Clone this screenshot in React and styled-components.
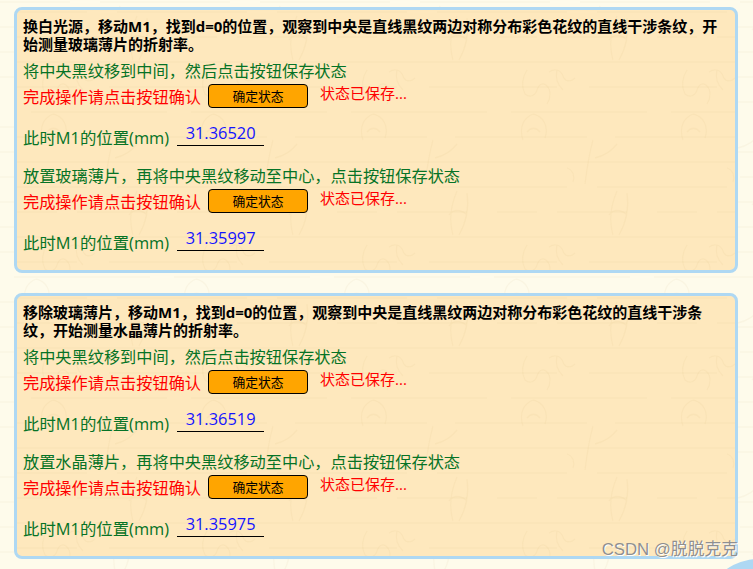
import React from "react";
import styled, { createGlobalStyle } from "styled-components";

// faint wallpaper: ruled lines every 25px with a flourish, repeats every 160x175
const flourish = encodeURIComponent(
    `<svg xmlns="http://www.w3.org/2000/svg" width="160" height="175" fill="none" stroke="#b08a40" stroke-opacity="0.05" stroke-width="1.3">
        <path d="M0 2H70M100 2H160M0 27H40M60 27H130M0 52H160M0 77H60M92 77H160M14 102H150M0 127H90M118 127H160M0 152H160"/>
        <path d="M30 60c-5 8-6 16-2 24 5 4 10 2 12-4s6-8 10-4 4 12 0 18M52 62c6-4 12-2 14 4s8 6 12 2M60 60c-2 8 0 14 6 20"/>
        <path d="M120 6c-6 14-8 30-4 44M130 8c2 14 0 28-8 42M112 30c4-6 12-6 18 0"/>
        <path d="M36 104c-10 4-14 14-10 26M36 104c10 2 16 12 12 24M30 122c4-5 9-5 13 0"/>
        <path d="M96 130c-4 14-6 28-8 44M120 134c-6 8-14 12-22 14M70 158c6 2 8 8 6 14"/>
    </svg>`
);

const GlobalStyle = createGlobalStyle`
    html, body {
        margin: 0;
        padding: 0;
    }
    body {
        width: 753px;
        height: 569px;
        overflow: hidden;
        font-family: "Open Sans", "Noto Sans CJK SC", sans-serif;
    }
`;

const Page = styled.div`
    position: relative;
    width: 753px;
    height: 569px;
    overflow: hidden;
    box-sizing: border-box;
    padding: 7px 15px 0 14px;
    display: flex;
    flex-direction: column;
    gap: 20px;
    background-color: #fefbeb;
    background-image: url("data:image/svg+xml,${flourish}");
`;

const Panel = styled.section`
    box-sizing: border-box;
    height: 266px;
    padding: 7px 6px 0;
    border: 3px solid #aed8f3;
    border-radius: 8px;
    background-color: #fee8bd;
    background-image: url("data:image/svg+xml,${flourish}");
`;

const Title = styled.p`
    margin: 0 0 7px;
    font-size: 15px;
    line-height: 18px;
    font-weight: 700;
    color: #000;
`;

const Step = styled.div`
    margin-bottom: ${props => props.$last ? 0 : 19}px;
`;

const Hint = styled.p`
    margin: 0;
    font-size: 16.2px;
    line-height: 22px;
    color: #067326;
`;

const ConfirmRow = styled.div`
    display: flex;
    align-items: center;
    height: 28px;
    font-size: 16.2px;
    color: #ff0000;
`;

const ConfirmButton = styled.button`
    box-sizing: border-box;
    width: 100px;
    height: 24px;
    margin: 0 12px 0 7px;
    padding: 0 0 2px;
    border: 1px solid #000;
    border-radius: 4px;
    background: #ffa500;
    color: #000;
    font-family: inherit;
    font-size: 12.8px;
`;

const Saved = styled.span`
    font-size: 15px;
    align-self: flex-start;
    line-height: 22px;
`;

const PositionRow = styled.div`
    display: flex;
    align-items: flex-end;
    margin-top: 6px;
    height: 30px;
    font-size: 16.4px;
    color: #067326;
`;

const PositionLabel = styled.span`
    line-height: 16px;
`;

const PositionValue = styled.span`
    box-sizing: border-box;
    width: 87px;
    margin-left: 8px;
    padding-bottom: 1px;
    border-bottom: 1px solid #000;
    text-align: center;
    font-size: 16.4px;
    line-height: 22px;
    color: #1414ff;
`;

const Watermark = styled.span`
    position: absolute;
    right: 15px;
    bottom: 9px;
    font-family: "Liberation Sans", "Noto Sans CJK SC", sans-serif;
    font-size: 16.8px;
    color: #8f8f8f;
    text-shadow: 1px 1px 0 #ffffff;
`;

const CornerBlob = styled.div`
    position: absolute;
    right: -64px;
    bottom: -37px;
    width: 98px;
    height: 48px;
    border-radius: 50%;
    background: #aed8f3;
`;

const experiments = [
    {
        title: "换白光源，移动M1，找到d=0的位置，观察到中央是直线黑纹两边对称分布彩色花纹的直线干涉条纹，开始测量玻璃薄片的折射率。",
        steps: [
            { hint: "将中央黑纹移到中间，然后点击按钮保存状态", value: "31.36520" },
            { hint: "放置玻璃薄片，再将中央黑纹移动至中心，点击按钮保存状态", value: "31.35997" },
        ],
    },
    {
        title: "移除玻璃薄片，移动M1，找到d=0的位置，观察到中央是直线黑纹两边对称分布彩色花纹的直线干涉条纹，开始测量水晶薄片的折射率。",
        steps: [
            { hint: "将中央黑纹移到中间，然后点击按钮保存状态", value: "31.36519" },
            { hint: "放置水晶薄片，再将中央黑纹移动至中心，点击按钮保存状态", value: "31.35975" },
        ],
    },
];

const App = () => (
    <Page>
        <GlobalStyle />
        {experiments.map(item => (
            <Panel key={item.title}>
                <Title>{item.title}</Title>
                {item.steps.map((step, i) => (
                    <Step key={step.value} $last={i === item.steps.length - 1}>
                        <Hint>{step.hint}</Hint>
                        <ConfirmRow>
                            完成操作请点击按钮确认
                            <ConfirmButton>确定状态</ConfirmButton>
                            <Saved>状态已保存...</Saved>
                        </ConfirmRow>
                        <PositionRow>
                            <PositionLabel>此时M1的位置(mm)</PositionLabel>
                            <PositionValue>{step.value}</PositionValue>
                        </PositionRow>
                    </Step>
                ))}
            </Panel>
        ))}
        <CornerBlob />
        <Watermark>CSDN @脱脱克克</Watermark>
    </Page>
);

export default App;
